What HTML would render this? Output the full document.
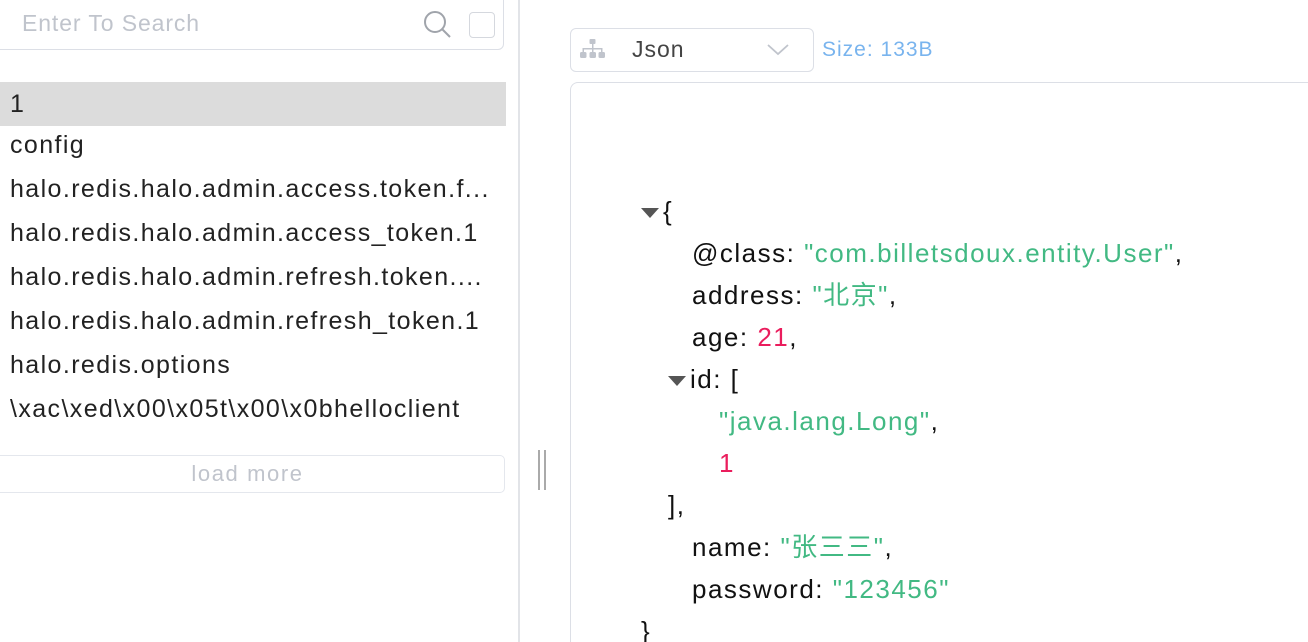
<!DOCTYPE html>
<html><head><meta charset="utf-8"><style>
html,body{margin:0;width:1308px;height:642px;overflow:hidden}
body{background:#fff;font-family:"Liberation Sans","Noto Sans CJK SC",sans-serif;position:relative}
.abs{position:absolute}
.search{left:-10px;top:-8px;width:514px;height:58px;border:1px solid #dcdfe6;border-radius:6px;box-sizing:border-box}
.ph{left:22px;top:10px;font-size:23px;color:#c0c4cc;letter-spacing:0.9px}
.item{position:absolute;left:0;width:506px;height:44px;line-height:44px;padding-left:10px;box-sizing:border-box;font-size:25px;letter-spacing:1.4px;color:#222;white-space:nowrap;overflow:hidden}
.sel{background:#dcdcdc}
.load{left:-10px;top:455px;width:515px;height:38px;border:1.5px solid #e4e7ed;border-radius:5px;box-sizing:border-box;text-align:center;line-height:36px;font-size:22px;letter-spacing:1.6px;color:#c0c4cc}
.json{font-size:26px;letter-spacing:1.5px;color:#111;line-height:42px;white-space:nowrap}
.s{color:#42b983}.n{color:#ea1d5d}
.tri{display:inline-block;width:0;height:0;border-left:9px solid transparent;border-right:9px solid transparent;border-top:10px solid #555;vertical-align:middle;margin-right:4px}
</style></head><body>
<div class="abs search"></div>
<div class="abs ph">Enter To Search</div>
<svg class="abs" style="left:422px;top:9px" width="30" height="30" viewBox="0 0 30 30"><circle cx="13" cy="13" r="10" fill="none" stroke="#a0a4ab" stroke-width="2"/><line x1="20.5" y1="20.5" x2="28" y2="28" stroke="#a0a4ab" stroke-width="2"/></svg>
<div class="abs" style="left:469px;top:12px;width:26px;height:26px;border:1.5px solid #d5d8de;border-radius:4px;box-sizing:border-box"></div>
<div class="item sel" style="top:82px">1</div>
<div class="item" style="top:123px">config</div>
<div class="item" style="top:167px">halo.redis.halo.admin.access.token.f...</div>
<div class="item" style="top:211px">halo.redis.halo.admin.access_token.1</div>
<div class="item" style="top:255px">halo.redis.halo.admin.refresh.token....</div>
<div class="item" style="top:299px">halo.redis.halo.admin.refresh_token.1</div>
<div class="item" style="top:343px">halo.redis.options</div>
<div class="item" style="top:387px">\xac\xed\x00\x05t\x00\x0bhelloclient</div>
<div class="abs load">load more</div>
<div class="abs" style="left:518px;top:0;width:2px;height:642px;background:#e2e4e8"></div>
<div class="abs" style="left:538px;top:450px;width:2px;height:40px;background:#aaa"></div>
<div class="abs" style="left:544px;top:450px;width:2px;height:40px;background:#aaa"></div>
<div class="abs" style="left:570px;top:28px;width:244px;height:44px;border:1.5px solid #dcdfe6;border-radius:6px;box-sizing:border-box"></div>
<svg class="abs" style="left:580px;top:39px" width="25" height="22" viewBox="0 0 25 22"><g fill="#c0c4cc"><rect x="9.5" y="0" width="6" height="5" rx="1"/><rect x="12" y="5" width="1.5" height="4"/><rect x="2.5" y="9" width="20" height="1.5"/><rect x="2.5" y="9" width="1.5" height="4"/><rect x="12" y="9" width="1.5" height="4"/><rect x="21" y="9" width="1.5" height="4"/><rect x="0" y="13" width="6.5" height="6" rx="1.5"/><rect x="9.5" y="13" width="6.5" height="6" rx="1.5"/><rect x="18.5" y="13" width="6.5" height="6" rx="1.5"/></g></svg>
<div class="abs" style="left:632px;top:36px;font-size:23px;letter-spacing:1px;color:#444">Json</div>
<svg class="abs" style="left:766px;top:43px" width="24" height="14" viewBox="0 0 24 14"><polyline points="2,2 12,11 22,2" fill="none" stroke="#c0c4cc" stroke-width="1.8"/></svg>
<div class="abs" style="left:822px;top:38px;font-size:21px;letter-spacing:1px;color:#79b4ee">Size: 133B</div>
<div class="abs" style="left:570px;top:82px;width:738px;height:560px;border-left:1.5px solid #dcdfe6;border-top:1.5px solid #dcdfe6;border-top-left-radius:8px;box-sizing:border-box"></div>
<div class="abs json" style="left:641px;top:190px;height:452px;overflow:hidden">
<div><span class="tri"></span>{</div>
<div style="padding-left:51px">@class: <span class="s">"com.billetsdoux.entity.User"</span>,</div>
<div style="padding-left:51px">address: <span class="s">"北京"</span>,</div>
<div style="padding-left:51px">age: <span class="n">21</span>,</div>
<div style="padding-left:27px"><span class="tri"></span>id: [</div>
<div style="padding-left:78px"><span class="s">"java.lang.Long"</span>,</div>
<div style="padding-left:78px"><span class="n">1</span></div>
<div style="padding-left:27px">],</div>
<div style="padding-left:51px">name: <span class="s">"张三三"</span>,</div>
<div style="padding-left:51px">password: <span class="s">"123456"</span></div>
<div style="padding-left:0">}</div>
</div>
</body></html>
